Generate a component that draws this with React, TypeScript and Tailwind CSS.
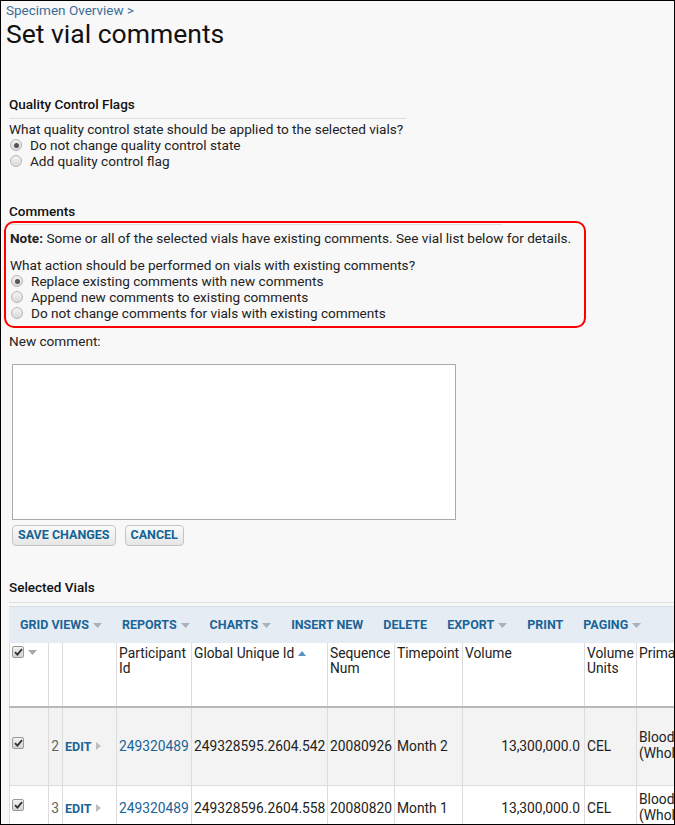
import type { ReactNode } from 'react'

// ─── SMALL CONTROLS ───────────────────────────────────────

function Radio({ checked }: { checked?: boolean }) {
  return (
    <span className="inline-flex h-[12px] w-[12px] shrink-0 items-center justify-center rounded-full border border-[#b5b5b5] bg-gradient-to-b from-[#f4f4f4] to-[#d9d9d9]">
      {checked && <span className="h-[5px] w-[5px] rounded-full bg-[#555]" />}
    </span>
  )
}

function Check() {
  return (
    <span className="inline-flex h-[12px] w-[12px] items-center justify-center rounded-[2px] border border-[#9a9a9a] bg-gradient-to-b from-[#f2f2f2] to-[#d4d4d4]">
      <svg width="9" height="8" viewBox="0 0 9 8">
        <path d="M1 4.2 L3.4 6.6 L8 1.2" fill="none" stroke="#333" strokeWidth="1.8" />
      </svg>
    </span>
  )
}

function Caret({ color = '#a9b1ba' }: { color?: string }) {
  return (
    <svg className="ml-[4px]" width="9" height="5" viewBox="0 0 9 5">
      <path d="M0 0 H9 L4.5 5 Z" fill={color} />
    </svg>
  )
}

function RadioLine({ checked, children }: { checked?: boolean; children: ReactNode }) {
  return (
    <div className="flex h-[16px] items-center pl-[1px]">
      <Radio checked={checked} />
      <span className="ml-[8px]">{children}</span>
    </div>
  )
}

function Button({ children }: { children: ReactNode }) {
  return (
    <button className="h-[21px] rounded-[4px] border border-[#c4c4c4] bg-gradient-to-b from-[#fbfbfb] to-[#e6e6e6] px-[5px] text-[12.5px] font-bold leading-none text-[#126495]">
      {children}
    </button>
  )
}

// ─── DATA ─────────────────────────────────────────────────

const TOOLBAR: { label: string; menu: boolean }[] = [
  { label: 'GRID VIEWS', menu: true },
  { label: 'REPORTS', menu: true },
  { label: 'CHARTS', menu: true },
  { label: 'INSERT NEW', menu: false },
  { label: 'DELETE', menu: false },
  { label: 'EXPORT', menu: true },
  { label: 'PRINT', menu: false },
  { label: 'PAGING', menu: true },
]

const ROWS = [
  { n: 2, pid: '249320489', guid: '249328595.2604.542', seq: '20080926', tp: 'Month 2', vol: '13,300,000.0', units: 'CEL', h: 'h-[78px]', bg: 'bg-[#f3f3f3]' },
  { n: 3, pid: '249320489', guid: '249328596.2604.558', seq: '20080820', tp: 'Month 1', vol: '13,300,000.0', units: 'CEL', h: 'h-[46px]', bg: 'bg-white' },
]

const CELL = 'border-x border-[#dcdcdc] px-[2px]'
const HEAD = 'border-x border-[#dcdcdc] px-[2px] pt-[3px] text-left font-normal'

// ─── PAGE ─────────────────────────────────────────────────

export default function App() {
  return (
    <div
      className="h-[825px] w-[675px] overflow-hidden border border-black bg-[#f8f8f8] text-[13.6px] leading-[16px] text-[#222]"
      style={{ fontFamily: 'Roboto, "Liberation Sans", sans-serif' }}
    >
      <div className="pl-[5px] pt-px text-[13.5px] text-[#3b6d98]">Specimen Overview &gt;</div>
      <h1 className="pl-[5px] pt-[1px] text-[26.5px] leading-[30px] text-[#111]">Set vial comments</h1>

      {/* Quality control flags */}
      <div className="mt-[46px] pl-[8px]">
        <div className="w-[397px] border-b border-[#dedede] pb-[5px] text-[13.5px] font-medium leading-[18px] text-[#111]">
          Quality Control Flags
        </div>
        <div className="pt-[2px]">What quality control state should be applied to the selected vials?</div>
        <RadioLine checked>Do not change quality control state</RadioLine>
        <RadioLine>Add quality control flag</RadioLine>
      </div>

      {/* Comments */}
      <div className="mt-[33px] pl-[8px]">
        <div className="text-[13.5px] font-medium leading-[18px] text-[#111]">Comments</div>
      </div>
      <div className="ml-[3px] mt-[1px] w-[582px] rounded-[10px] border-2 border-[#ff0000] pb-[5px] pl-[4px] pr-[4px] pt-[1px]">
        <div className="w-[492px] border-t border-[#dedede]" />
        <div className="pt-[5px]">
          <span className="font-bold">Note:</span> Some or all of the selected vials have existing comments. See vial list below for details.
        </div>
        <div className="pt-[11px]">What action should be performed on vials with existing comments?</div>
        <RadioLine checked>Replace existing comments with new comments</RadioLine>
        <RadioLine>Append new comments to existing comments</RadioLine>
        <RadioLine>Do not change comments for vials with existing comments</RadioLine>
      </div>

      <div className="pl-[8px] pt-[5px]">New comment:</div>
      <div className="pl-[11px] pt-[15px]">
        <div className="h-[156px] w-[444px] border border-[#a9a9a9] bg-white" />
        <div className="mt-[5px] flex gap-[9px]">
          <Button>SAVE CHANGES</Button>
          <Button>CANCEL</Button>
        </div>
      </div>

      {/* Selected vials */}
      <div className="mt-[32px] pl-[8px]">
        <div className="border-b border-[#dedede] pb-[6px] text-[13.5px] font-medium leading-[18px] text-[#111]">
          Selected Vials
        </div>
        <div className="mt-[3px] flex h-[37px] items-center gap-[20px] border-t border-[#d6dde5] bg-[#e5ecf3] pl-[11px] text-[12.5px] font-bold text-[#1b6497]">
          {TOOLBAR.map((t) => (
            <span key={t.label} className="flex items-center whitespace-nowrap">
              {t.label}
              {t.menu && <Caret />}
            </span>
          ))}
        </div>

        <table className="w-[740px] table-fixed border-collapse text-[13.8px] leading-[15px] text-[#222]">
          <colgroup>
            <col className="w-[39px]" />
            <col className="w-[14px]" />
            <col className="w-[54px]" />
            <col className="w-[75px]" />
            <col className="w-[136px]" />
            <col className="w-[67px]" />
            <col className="w-[68px]" />
            <col className="w-[122px]" />
            <col className="w-[52px]" />
            <col className="w-[113px]" />
          </colgroup>
          <thead>
            <tr className="h-[64px] border-b-2 border-[#b8b8b8] bg-white align-top">
              <th className="border-x border-[#dcdcdc] pl-[2px] pt-[3px] text-left font-normal">
                <div className="flex items-center">
                  <Check />
                  <Caret color="#a8a8a8" />
                </div>
              </th>
              <th className="border-x border-[#dcdcdc]" />
              <th className="border-x border-[#dcdcdc]" />
              <th className={HEAD}>Participant Id</th>
              <th className={HEAD}>
                <span className="inline-flex items-center whitespace-nowrap">
                  Global Unique Id
                  <svg className="ml-[4px]" width="8" height="5" viewBox="0 0 8 5">
                    <path d="M0 5 H8 L4 0 Z" fill="#5a8fc4" />
                  </svg>
                </span>
              </th>
              <th className={HEAD}>Sequence Num</th>
              <th className={HEAD}>Timepoint</th>
              <th className={HEAD}>Volume</th>
              <th className={HEAD}>Volume Units</th>
              <th className={HEAD}>Primary Type</th>
            </tr>
          </thead>
          <tbody>
            {ROWS.map((r) => (
              <tr key={r.n} className={`${r.h} ${r.bg} border-b border-[#dcdcdc] align-middle`}>
                <td className="border-x border-[#dcdcdc] pl-[2px]">
                  <div className="-mt-[6px] flex">
                    <Check />
                  </div>
                </td>
                <td className="border-x border-[#dcdcdc] pr-[3px] text-right text-[#666]">{r.n}</td>
                <td className="border-x border-[#dcdcdc] pl-[2px] whitespace-nowrap">
                  <span className="inline-flex items-center">
                    <span className="text-[12.5px] font-bold text-[#1b6497]">EDIT</span>
                    <svg className="ml-[5px]" width="5" height="8" viewBox="0 0 5 8">
                      <path d="M0 0 L5 4 L0 8 Z" fill="#bdbdbd" />
                    </svg>
                  </span>
                </td>
                <td className={`${CELL} text-[#1b6497]`}>{r.pid}</td>
                <td className={`${CELL} whitespace-nowrap`}>{r.guid}</td>
                <td className={CELL}>{r.seq}</td>
                <td className={CELL}>{r.tp}</td>
                <td className="border-x border-[#dcdcdc] pr-[4px] text-right">{r.vol}</td>
                <td className={CELL}>{r.units}</td>
                <td className={CELL}>
                  <div className="-mt-[3px] leading-[16px]">
                    Blood
                    <br />
                    (Whole Blood)
                  </div>
                </td>
              </tr>
            ))}
          </tbody>
        </table>
      </div>
    </div>
  )
}
